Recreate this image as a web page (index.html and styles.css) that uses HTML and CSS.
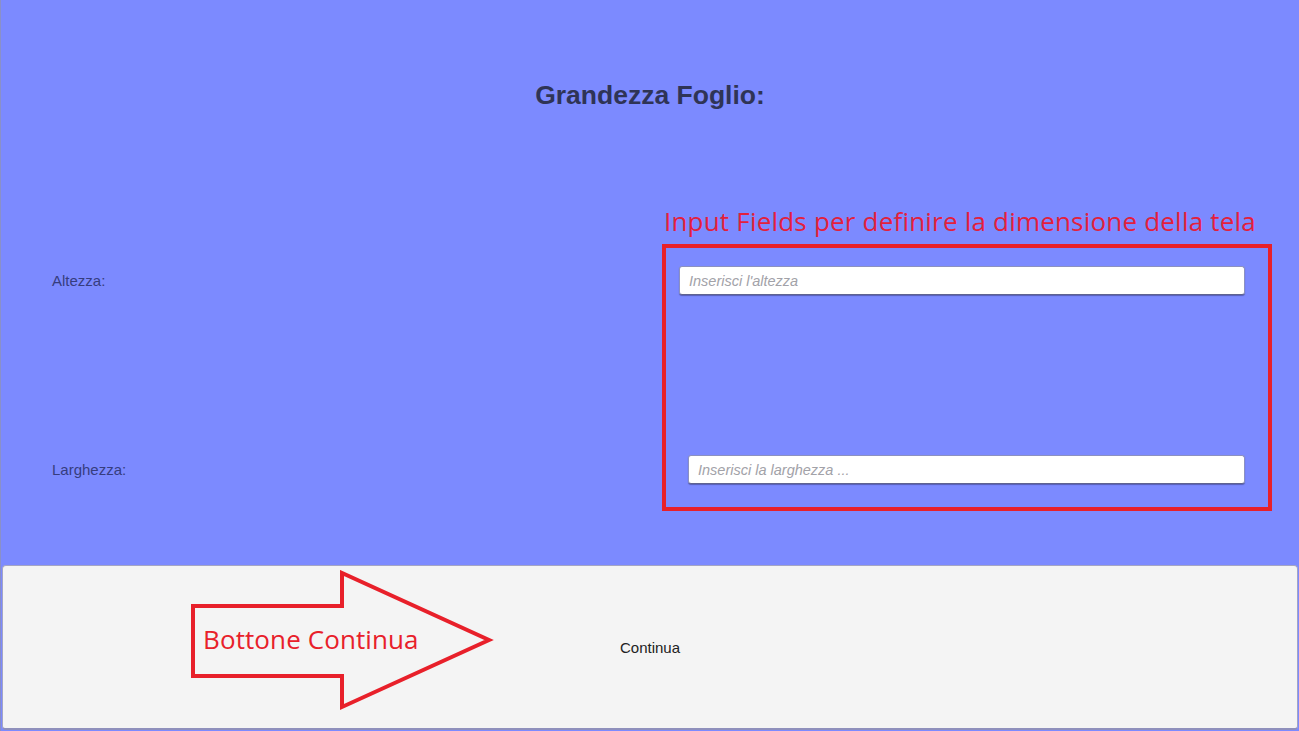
FILE: index.html
```html
<!DOCTYPE html>
<html lang="it">
<head>
<meta charset="utf-8">
<title>Grandezza Foglio</title>
<link rel="stylesheet" href="styles.css">
</head>
<body>
<div class="screen">
  <h1 class="title">Grandezza Foglio:</h1>
  <div class="row row-first">
    <label class="label" for="h">Altezza:</label>
    <input class="field field-a" id="h" type="text" placeholder="Inserisci l'altezza">
  </div>
  <div class="row row-second">
    <label class="label" for="w">Larghezza:</label>
    <input class="field field-b" id="w" type="text" placeholder="Inserisci la larghezza ...">
  </div>
  <button class="continue" type="button">Continua</button>

  <div class="note note-fields">Input Fields per definire la dimensione della tela</div>
  <div class="note-box"></div>
  <svg class="arrow" width="310" height="146" viewBox="0 0 310 146">
    <polygon points="3,36 152,36 152,3 299,70 152,137 152,106 3,106" fill="none" stroke="#e8202a" stroke-width="4" stroke-linejoin="miter"/>
  </svg>
  <div class="note note-button">Bottone Continua</div>
</div>
</body>
</html>
```
FILE: styles.css
```css
html, body {
  margin: 0;
  padding: 0;
}
body {
  width: 1299px;
  height: 731px;
  overflow: hidden;
  font-family: "Liberation Sans", Arial, sans-serif;
}
.screen {
  position: relative;
  width: 1299px;
  height: 731px;
  background: #7c8aff;
  display: flex;
  flex-direction: column;
  box-sizing: border-box;
  border-left: 1px solid #8a90c8;
}
.title {
  margin: 80px 0 0;
  height: 30px;
  line-height: 30px;
  text-align: center;
  font-size: 26.5px;
  font-weight: bold;
  color: #2f3456;
}
.row {
  display: flex;
  align-items: center;
  height: 29px;
  padding-left: 51px;
}
.row-first {
  margin-top: 156px;
}
.row-second {
  margin-top: 160px;
}
.label {
  font-size: 15px;
  color: #363d7e;
}
.row-first .label {
  width: 627px;
}
.row-second .label {
  width: 636px;
}
.field {
  box-sizing: border-box;
  height: 29px;
  background: #ffffff;
  border: 1px solid #8c91c0;
  border-bottom-color: #5f6390;
  border-radius: 3px;
  box-shadow: 0 1px 1px rgba(40, 40, 90, 0.45);
  padding: 0 9px;
  font-family: "Liberation Sans", Arial, sans-serif;
  font-size: 14.5px;
  font-style: italic;
  outline: none;
}
.field::placeholder {
  color: #a2a2a8;
}
.field-a {
  width: 566px;
}
.field-b {
  width: 557px;
}
.continue {
  margin: 81px 1px 0 1px;
  height: 165px;
  background: #f4f4f4;
  border: 1px solid #a4a5c4;
  border-bottom: 2px solid #8f90bc;
  border-radius: 4px;
  font-family: "Liberation Sans", Arial, sans-serif;
  font-size: 15px;
  color: #222222;
  padding: 0;
}
.note {
  position: absolute;
  font-family: "Open Sans", sans-serif;
  color: #e3203c;
  white-space: nowrap;
  line-height: 32px;
}
.note-fields {
  left: 663px;
  top: 205px;
  font-size: 26px;
  letter-spacing: 0.2px;
}
.note-box {
  position: absolute;
  left: 661px;
  top: 244px;
  width: 610px;
  height: 267px;
  box-sizing: border-box;
  border: 4px solid #e8202a;
}
.arrow {
  position: absolute;
  left: 189px;
  top: 570px;
}
.note-button {
  left: 202px;
  top: 623px;
  font-size: 26px;
  letter-spacing: 0.1px;
  color: #e8202a;
}
```
